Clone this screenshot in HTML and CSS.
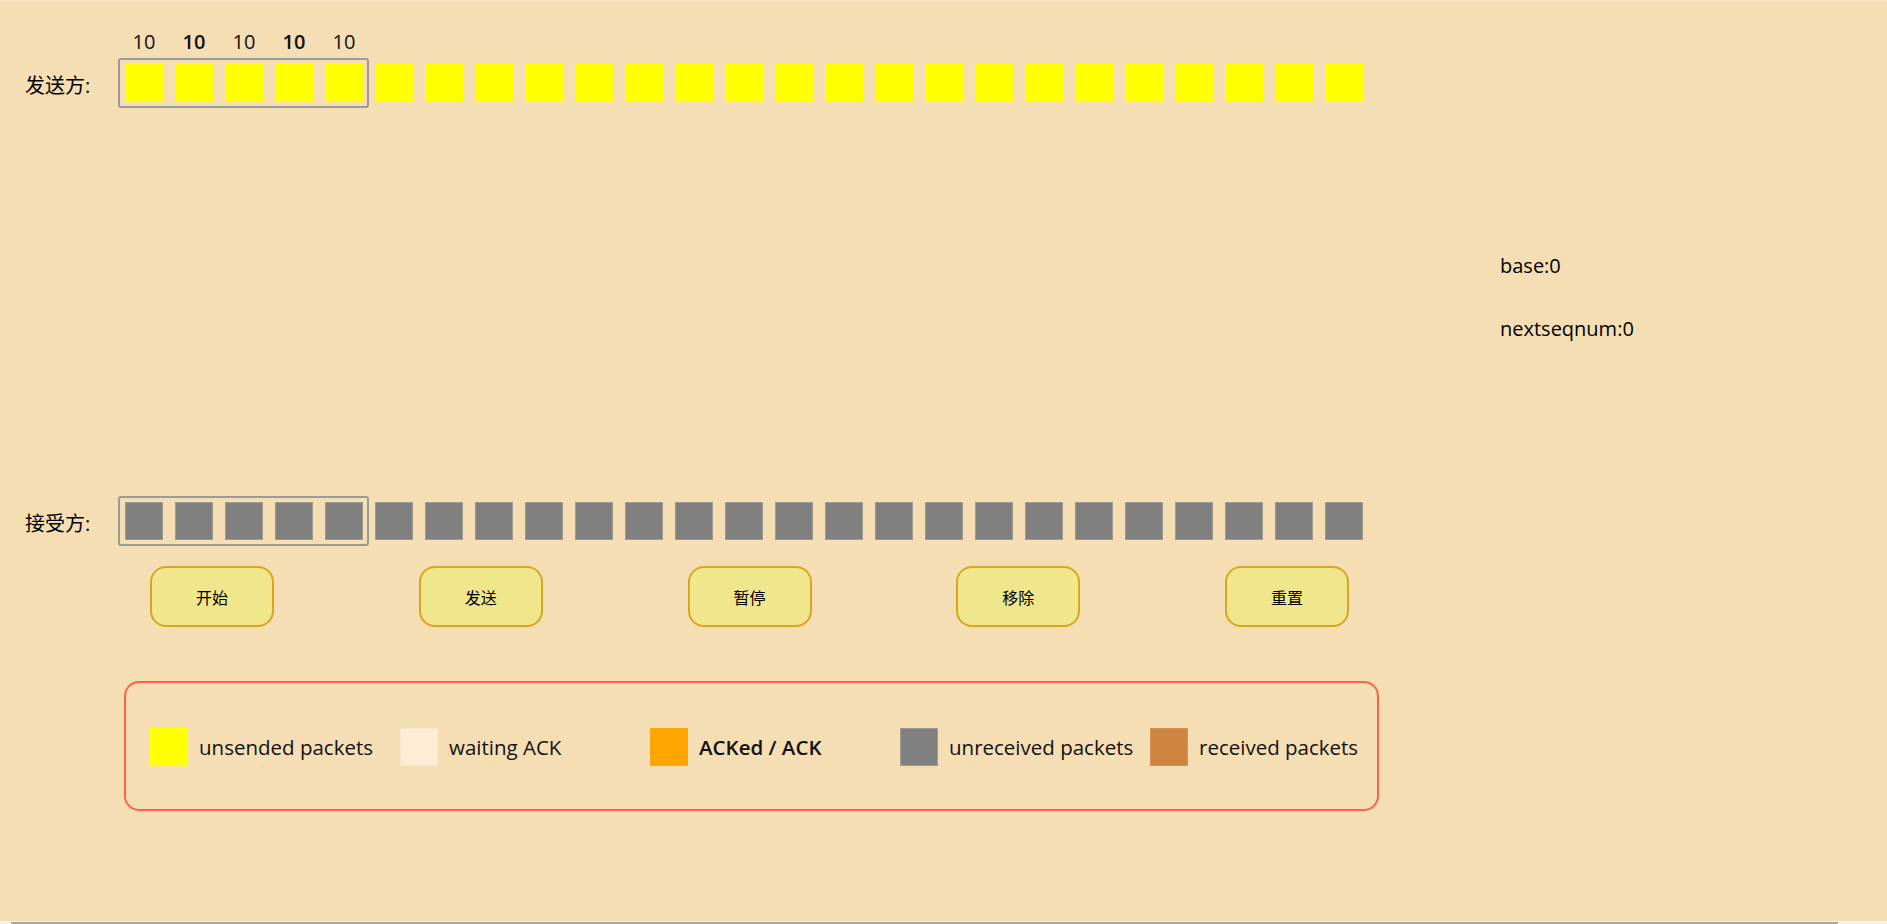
FILE: index.html
```html
<!DOCTYPE html>
<html lang="zh">
<head>
<meta charset="utf-8">
<title>GBN</title>
<link rel="stylesheet" href="styles.css">
</head>
<body>
<div class="page">
  <main class="stage">
    <div class="seq-labels">
      <span>10</span><span class="heavy">10</span><span>10</span><span class="heavy">10</span><span>10</span>
    </div>
    <div class="lane sender">
      <span class="lane-label">发送方:</span>
      <div class="track">
        <div class="window"></div>
        <div class="pkt unsent"></div><div class="pkt unsent"></div><div class="pkt unsent"></div><div class="pkt unsent"></div><div class="pkt unsent"></div>
        <div class="pkt unsent"></div><div class="pkt unsent"></div><div class="pkt unsent"></div><div class="pkt unsent"></div><div class="pkt unsent"></div>
        <div class="pkt unsent"></div><div class="pkt unsent"></div><div class="pkt unsent"></div><div class="pkt unsent"></div><div class="pkt unsent"></div>
        <div class="pkt unsent"></div><div class="pkt unsent"></div><div class="pkt unsent"></div><div class="pkt unsent"></div><div class="pkt unsent"></div>
        <div class="pkt unsent"></div><div class="pkt unsent"></div><div class="pkt unsent"></div><div class="pkt unsent"></div><div class="pkt unsent"></div>
      </div>
    </div>
    <div class="lane receiver">
      <span class="lane-label">接受方:</span>
      <div class="track">
        <div class="window"></div>
        <div class="pkt unreceived"></div><div class="pkt unreceived"></div><div class="pkt unreceived"></div><div class="pkt unreceived"></div><div class="pkt unreceived"></div>
        <div class="pkt unreceived"></div><div class="pkt unreceived"></div><div class="pkt unreceived"></div><div class="pkt unreceived"></div><div class="pkt unreceived"></div>
        <div class="pkt unreceived"></div><div class="pkt unreceived"></div><div class="pkt unreceived"></div><div class="pkt unreceived"></div><div class="pkt unreceived"></div>
        <div class="pkt unreceived"></div><div class="pkt unreceived"></div><div class="pkt unreceived"></div><div class="pkt unreceived"></div><div class="pkt unreceived"></div>
        <div class="pkt unreceived"></div><div class="pkt unreceived"></div><div class="pkt unreceived"></div><div class="pkt unreceived"></div><div class="pkt unreceived"></div>
      </div>
    </div>
    <div class="controls">
      <button class="btn">开始</button>
      <button class="btn">发送</button>
      <button class="btn">暂停</button>
      <button class="btn">移除</button>
      <button class="btn">重置</button>
    </div>
    <div class="legend">
      <div class="legend-item"><span class="swatch sw-unsent"></span><span>unsended packets</span></div>
      <div class="legend-item"><span class="swatch sw-waiting"></span><span>waiting ACK</span></div>
      <div class="legend-item"><span class="swatch sw-acked"></span><span class="heavy">ACKed / ACK</span></div>
      <div class="legend-item"><span class="swatch sw-unreceived"></span><span>unreceived packets</span></div>
      <div class="legend-item"><span class="swatch sw-received"></span><span>received packets</span></div>
    </div>
  </main>
  <aside class="status">
    <p class="status-line">base:0</p>
    <p class="status-line next">nextseqnum:0</p>
  </aside>
</div>
<div class="hscroll"><div class="hscroll-thumb"></div></div>
</body>
</html>
```

FILE: styles.css
```css
html, body {
  margin: 0;
  padding: 0;
}

body {
  background: #f0f0f0;
  font-family: "Open Sans", "Noto Sans CJK SC", sans-serif;
  color: #000;
  overflow: hidden;
}

.page {
  height: 921px;
  box-sizing: border-box;
  background: #f5deb3;
  border-top: 2px solid #f7e3c0;
  display: flex;
}

.stage {
  width: 1500px;
  flex: none;
  padding-top: 28px;
}

.heavy {
  font-weight: 600;
}

.seq-labels {
  display: flex;
  margin-left: 119px;
  height: 24px;
}

.seq-labels span {
  width: 38px;
  margin: 0 6px;
  text-align: center;
  font-size: 20px;
  line-height: 24px;
  color: #111;
}

.lane {
  display: flex;
  align-items: center;
  margin-top: 10px;
}

.lane.receiver {
  margin-top: 400px;
}

.lane-label {
  width: 119px;
  box-sizing: border-box;
  padding-left: 25px;
  padding-top: 5px;
  font-size: 20px;
  line-height: 26px;
}

.track {
  position: relative;
  display: flex;
}

.pkt {
  width: 38px;
  height: 38px;
  margin: 0 6px;
  box-sizing: border-box;
}

.pkt.unsent {
  background: #ffff00;
}

.pkt.unreceived {
  background: #808080;
  border: 1px solid #9f9a90;
}

.window {
  position: absolute;
  left: -1px;
  top: -6px;
  width: 251px;
  height: 50px;
  box-sizing: border-box;
  border: 2px solid #9c9a96;
  border-radius: 3px;
}

.controls {
  display: flex;
  gap: 144.75px;
  margin: 26px 0 0 150px;
}

.btn {
  width: 124px;
  height: 61px;
  box-sizing: border-box;
  padding: 0;
  background: #f0e68c;
  border: 2px solid #daa520;
  border-radius: 16px;
  font-family: "Noto Sans CJK SC", sans-serif;
  font-size: 16px;
  color: #000;
}

.legend {
  margin: 54px 0 0 124px;
  width: 1255px;
  height: 130px;
  box-sizing: border-box;
  border: 2px solid #ff6347;
  border-radius: 15px;
  display: flex;
  align-items: center;
  padding-left: 24px;
  padding-top: 2px;
}

.legend-item {
  width: 250px;
  flex: none;
  display: flex;
  align-items: center;
  font-size: 20.5px;
  color: #111;
}

.swatch {
  width: 38px;
  height: 38px;
  margin-right: 11px;
  box-sizing: border-box;
}

.sw-unsent { background: #ffff00; }
.sw-waiting { background: #feecd4; border: 1px solid #f8e6cc; }
.sw-acked { background: #ffa500; border: 1px solid #f8a812; }
.sw-unreceived { background: #808080; border: 1px solid #9f9a90; }
.sw-received { background: #cd853f; border: 1px solid #d39354; }

.status {
  padding-top: 252px;
}

.status-line {
  margin: 0;
  font-size: 20px;
  line-height: 24px;
}

.status-line.next {
  margin-top: 39px;
}

.hscroll {
  height: 3px;
  background: #f0f0f0;
  display: flex;
  align-items: flex-end;
  padding-left: 11px;
}

.hscroll-thumb {
  width: 1827px;
  height: 2px;
  background: #a8a8a8;
}
```
